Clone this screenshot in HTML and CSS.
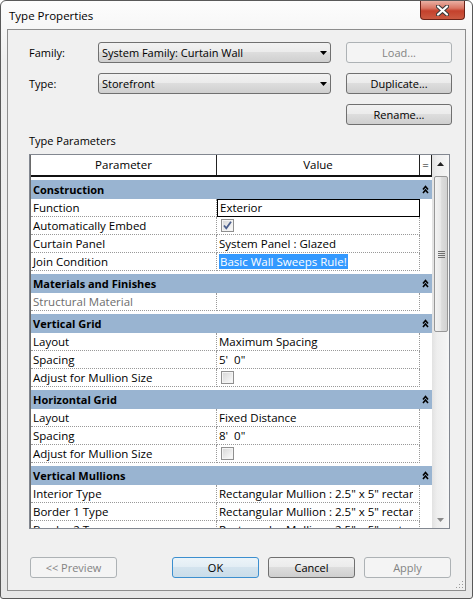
FILE: index.html
```html
<!DOCTYPE html>
<html>
<head>
<meta charset="utf-8">
<title>Type Properties</title>
<link rel="stylesheet" href="styles.css">
</head>
<body>
<div class="window">
  <div class="titlebar">
    <span class="title">Type Properties</span>
    <div class="close">
      <svg width="13" height="11" viewBox="0 0 13 11"><path d="M2 1.5 L11 9.5 M11 1.5 L2 9.5" stroke="#3b3b3b" stroke-width="4.2" stroke-linecap="round"/><path d="M2 1.5 L11 9.5 M11 1.5 L2 9.5" stroke="#ffffff" stroke-width="2.2" stroke-linecap="round"/></svg>
    </div>
  </div>
  <div class="client">
    <div class="form">
      <span class="lbl">Family:</span>
      <div class="combo"><span>System Family: Curtain Wall</span><svg class="arrow" width="7" height="4" viewBox="0 0 7 4"><path d="M0 0 H7 L3.5 4 Z" fill="#000"/></svg></div>
      <button class="btn" disabled>Load...</button>
      <span class="lbl">Type:</span>
      <div class="combo"><span>Storefront</span><svg class="arrow" width="7" height="4" viewBox="0 0 7 4"><path d="M0 0 H7 L3.5 4 Z" fill="#000"/></svg></div>
      <button class="btn">Duplicate...</button>
      <span></span><span></span>
      <button class="btn">Rename...</button>
    </div>
    <div class="section">Type Parameters</div>
    <div class="table">
      <div class="rows">
        <div class="head"><div class="h1">Parameter</div><div class="h2">Value</div><div class="h3">=</div></div>

        <div class="group"><span>Construction</span><svg class="chev" width="7" height="9" viewBox="0 0 7 9"><path d="M1 4.5 L3.5 1.5 L6 4.5 M1 8 L3.5 5 L6 8" stroke="#000" stroke-width="1.6" fill="none"/></svg></div>
        <div class="row"><div class="p">Function</div><div class="v edit">Exterior</div><div class="e"></div></div>
        <div class="row"><div class="p">Automatically Embed</div><div class="v"><span class="chk"><svg width="13" height="13" viewBox="0 0 13 13"><path d="M3 6.5 L5.3 9.3 L10 2.8" stroke="#4b5f8d" stroke-width="1.8" fill="none"/></svg></span></div><div class="e"></div></div>
        <div class="row"><div class="p">Curtain Panel</div><div class="v">System Panel : Glazed</div><div class="e"></div></div>
        <div class="row"><div class="p">Join Condition</div><div class="v"><span class="sel">Basic Wall Sweeps Rule!</span></div><div class="e"></div></div>

        <div class="group"><span>Materials and Finishes</span><svg class="chev" width="7" height="9" viewBox="0 0 7 9"><path d="M1 4.5 L3.5 1.5 L6 4.5 M1 8 L3.5 5 L6 8" stroke="#000" stroke-width="1.6" fill="none"/></svg></div>
        <div class="row"><div class="p dim">Structural Material</div><div class="v"></div><div class="e"></div></div>

        <div class="group"><span>Vertical Grid</span><svg class="chev" width="7" height="9" viewBox="0 0 7 9"><path d="M1 4.5 L3.5 1.5 L6 4.5 M1 8 L3.5 5 L6 8" stroke="#000" stroke-width="1.6" fill="none"/></svg></div>
        <div class="row"><div class="p">Layout</div><div class="v">Maximum Spacing</div><div class="e"></div></div>
        <div class="row"><div class="p">Spacing</div><div class="v">5'&nbsp; 0"</div><div class="e"></div></div>
        <div class="row"><div class="p">Adjust for Mullion Size</div><div class="v"><span class="chk"></span></div><div class="e"></div></div>

        <div class="group"><span>Horizontal Grid</span><svg class="chev" width="7" height="9" viewBox="0 0 7 9"><path d="M1 4.5 L3.5 1.5 L6 4.5 M1 8 L3.5 5 L6 8" stroke="#000" stroke-width="1.6" fill="none"/></svg></div>
        <div class="row"><div class="p">Layout</div><div class="v">Fixed Distance</div><div class="e"></div></div>
        <div class="row"><div class="p">Spacing</div><div class="v">8'&nbsp; 0"</div><div class="e"></div></div>
        <div class="row"><div class="p">Adjust for Mullion Size</div><div class="v"><span class="chk"></span></div><div class="e"></div></div>

        <div class="group"><span>Vertical Mullions</span><svg class="chev" width="7" height="9" viewBox="0 0 7 9"><path d="M1 4.5 L3.5 1.5 L6 4.5 M1 8 L3.5 5 L6 8" stroke="#000" stroke-width="1.6" fill="none"/></svg></div>
        <div class="row"><div class="p">Interior Type</div><div class="v"><span class="clip">Rectangular Mullion : 2.5" x 5" rectangular</span></div><div class="e"></div></div>
        <div class="row"><div class="p">Border 1 Type</div><div class="v"><span class="clip">Rectangular Mullion : 2.5" x 5" rectangular</span></div><div class="e"></div></div>
        <div class="row"><div class="p">Border 2 Type</div><div class="v"><span class="clip">Rectangular Mullion : 2.5" x 5" rectangular</span></div><div class="e"></div></div>
      </div>
      <div class="sb">
        <div class="sb-btn"><svg width="7" height="4" viewBox="0 0 7 4"><path d="M0 4 H7 L3.5 0 Z" fill="#222"/></svg></div>
        <div class="thumb"><svg width="7" height="7" viewBox="0 0 7 7"><path d="M0 0.5 H7 M0 2.5 H7 M0 4.5 H7 M0 6.5 H7" stroke="#6f6f6f" stroke-width="1"/></svg></div>
        <div class="sb-space"></div>
        <div class="sb-btn"><svg width="7" height="4" viewBox="0 0 7 4"><path d="M0 0 H7 L3.5 4 Z" fill="#8a8a8a"/></svg></div>
      </div>
    </div>
    <div class="footer">
      <button class="btn" disabled>&lt;&lt; Preview</button>
      <button class="btn default ok">OK</button>
      <button class="btn">Cancel</button>
      <button class="btn" disabled>Apply</button>
    </div>
    <svg class="grip" width="8" height="8" viewBox="0 0 8 8"><path d="M6 0h1v1h-1z M6 3h1v1h-1z M3 3h1v1h-1z M6 6h1v1h-1z M3 6h1v1h-1z M0 6h1v1h-1z" fill="#9a9a9a"/></svg>
  </div>
</div>
</body>
</html>
```

FILE: styles.css
```css
html, body {
  margin: 0;
  padding: 0;
  background: #ffffff;
}
body {
  font-family: "Open Sans", "Liberation Sans", sans-serif;
  font-size: 11px;
  color: #000;
}
.window {
  width: 473px;
  height: 599px;
  box-sizing: border-box;
  border: 1px solid #595959;
  border-radius: 6px 6px 3px 3px;
  background: linear-gradient(#fdfdfd 0, #efefef 60px, #e7e7e7 100%);
  display: flex;
  flex-direction: column;
  overflow: hidden;
}
.titlebar {
  height: 28px;
  flex: none;
  display: flex;
  justify-content: space-between;
}
.title {
  align-self: center;
  padding-left: 8px;
  margin-top: 1px;
  font-size: 11.5px;
  line-height: 14px;
}
.close {
  width: 45px;
  height: 19px;
  margin-right: 7px;
  box-sizing: border-box;
  border: 1px solid #6a2218;
  border-top: none;
  border-radius: 0 0 4px 4px;
  background: linear-gradient(#eab0a3 0, #d97563 40%, #c4412c 55%, #cb5a42 100%);
  display: flex;
  align-items: center;
  justify-content: center;
}
.client {
  flex: 1;
  margin: 0 6px 7px 6px;
  border: 1px solid #8d8d8d;
  background: #f0f0f0;
  display: flex;
  flex-direction: column;
  position: relative;
}
.form {
  display: grid;
  grid-template-columns: 54px 233px 106px;
  grid-auto-rows: 21px;
  column-gap: 15px;
  row-gap: 10px;
  padding: 12px 0 0 21px;
}
.lbl {
  display: flex;
  align-items: center;
}
.combo {
  box-sizing: border-box;
  border: 1px solid #707070;
  border-radius: 3px;
  background: linear-gradient(#f2f2f2, #ebebeb 50%, #dddddd 50%, #cfcfcf);
  display: flex;
  align-items: center;
  justify-content: space-between;
  padding: 0 3px 0 3px;
}
.btn {
  box-sizing: border-box;
  border: 1px solid #707070;
  border-radius: 3px;
  background: linear-gradient(#f2f2f2, #ebebeb 50%, #dddddd 50%, #cfcfcf);
  font-family: inherit;
  font-size: 11px;
  color: #000;
  padding: 0;
  margin: 0;
}
.btn:disabled {
  border-color: #adb2b5;
  background: #f4f4f4;
  color: #838383;
}
.btn.default {
  border-color: #3c8fcf;
  background: linear-gradient(#ecf4f9, #e2edf4 50%, #d3e3ee 50%, #cadde9);
}
.section {
  margin: 9px 0 0 21px;
  line-height: 14px;
}
.table {
  margin: 6px 0 0 21px;
  width: 421px;
  height: 375px;
  box-sizing: border-box;
  border: 1px solid #828790;
  display: flex;
  background: #fff;
}
.rows {
  width: 402px;
  box-sizing: border-box;
  border-left: 1px solid #6a6a6a;
  overflow: hidden;
  background: #fff;
  font-size: 11.5px;
}
.head {
  display: flex;
  height: 22px;
  box-sizing: border-box;
  border-bottom: 2px solid #111;
}
.head > div {
  box-sizing: border-box;
  border-right: 1px solid #222;
  text-align: center;
  line-height: 20px;
}
.h1 { width: 186px; }
.h2 { width: 203px; }
.h3 { width: 12px; }
.group {
  margin-top: 3px;
  height: 19px;
  background: #99b4d1;
  display: flex;
  align-items: center;
  justify-content: space-between;
  padding: 0 3px 0 2px;
  font-weight: bold;
  font-size: 11px;
}
.row {
  display: flex;
  height: 18px;
}
.p, .v {
  box-sizing: border-box;
  border-right: 1px dotted #999;
  border-bottom: 1px dotted #999;
  padding-left: 2px;
  line-height: 17px;
  white-space: nowrap;
  overflow: hidden;
}
.p { width: 186px; }
.v { width: 203px; }
.e { width: 12px; }
.dim { color: #6d6d6d; }
.v.edit {
  border: 1px solid #000;
  line-height: 15px;
}
.sel {
  background: #3399ff;
  color: #fff;
  padding: 0 1px;
}
.clip {
  display: block;
  overflow: hidden;
  margin-right: 6px;
}
.chk {
  display: block;
  width: 13px;
  height: 13px;
  margin: 2px 0 0 2px;
  box-sizing: border-box;
  border: 1px solid #8f8f8f;
  background: linear-gradient(135deg, #d6d6d6, #fdfdfd);
  box-shadow: inset 0 0 0 1px #f4f4f4;
}
.chk svg {
  display: block;
  margin: -1px;
}
.sb {
  width: 17px;
  display: flex;
  flex-direction: column;
  background: linear-gradient(90deg, #e2e2e2, #eeeeee 30%, #f3f3f3 80%, #f7f7f7);
}
.sb-btn {
  height: 17px;
  flex: none;
  display: flex;
  align-items: center;
  justify-content: center;
}
.thumb {
  margin: 4px 1px 0 2px;
  height: 156px;
  flex: none;
  box-sizing: border-box;
  border: 1px solid #979797;
  border-radius: 2px;
  background: linear-gradient(90deg, #f3f3f3, #e9e9e9 45%, #dcdcdc 55%, #d2d2d2);
  display: flex;
  align-items: center;
  justify-content: center;
}
.sb-space {
  flex: 1;
}
.footer {
  display: flex;
  gap: 9px;
  padding-left: 22px;
  margin-top: 28px;
}
.footer .btn {
  width: 87px;
  height: 21px;
}
.footer .ok {
  margin-left: 46px;
}
.grip {
  position: absolute;
  right: 1px;
  bottom: 1px;
}
```
